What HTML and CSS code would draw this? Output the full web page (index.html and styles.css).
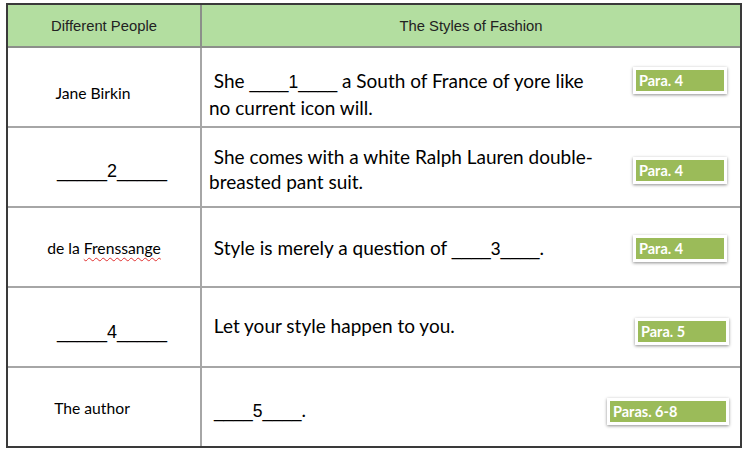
FILE: index.html
```html
<!DOCTYPE html>
<html>
<head>
<meta charset="utf-8">
<link rel="stylesheet" href="styles.css">
</head>
<body>
<div class="table">
  <div class="row head">
    <div class="cell left"><span>Different People</span></div>
    <div class="cell right"><span>The Styles of Fashion</span></div>
  </div>
  <div class="row r1">
    <div class="cell left"><span class="name">Jane Birkin</span></div>
    <div class="cell right">
      <p class="text">&nbsp;She <span class="us">____1____</span> a South of France of yore like<br>no current icon will.</p>
      <div class="badge">Para. 4</div>
    </div>
  </div>
  <div class="row r2">
    <div class="cell left"><span class="blank us">_____2_____</span></div>
    <div class="cell right">
      <p class="text">&nbsp;She comes with a white Ralph Lauren double-breasted pant suit.</p>
      <div class="badge">Para. 4</div>
    </div>
  </div>
  <div class="row r3">
    <div class="cell left"><span class="name">de la <span class="spell">Frenssange</span></span></div>
    <div class="cell right">
      <p class="text">&nbsp;Style is merely a question of <span class="us">____3____</span>.</p>
      <div class="badge">Para. 4</div>
    </div>
  </div>
  <div class="row r4">
    <div class="cell left"><span class="blank us">_____4_____</span></div>
    <div class="cell right">
      <p class="text">&nbsp;Let your style happen to you.</p>
      <div class="badge">Para. 5</div>
    </div>
  </div>
  <div class="row r5 last">
    <div class="cell left"><span class="name">The author</span></div>
    <div class="cell right">
      <p class="text">&nbsp;<span class="us">____5____</span>.</p>
      <div class="badge wide">Paras. 6-8</div>
    </div>
  </div>
</div>
</body>
</html>
```
FILE: styles.css
```css
* { box-sizing: border-box; }
body {
  margin: 0;
  background: #ffffff;
  font-family: "Lato", "Liberation Sans", sans-serif;
  color: #000;
}
.table {
  margin: 3px 0 0 6px;
  width: 736px;
  border: 2px solid #3a3a3a;
  display: flex;
  flex-direction: column;
}
.row {
  display: grid;
  grid-template-columns: 194px 538px;
  height: 80px;
  border-bottom: 2px solid #a6a6a6;
}
.row.last {
  height: 78px;
  border-bottom: none;
}
.row.head {
  height: 43px;
  background: #b3dea0;
  border-bottom: 2px solid #8c8f8a;
}
.cell {
  display: flex;
  align-items: center;
}
.cell.left {
  justify-content: center;
  border-right: 2px solid #a6a6a6;
}
.head .cell.left { border-right-color: #8c8f8a; }
.head .cell {
  font-family: "Liberation Sans", Arial, sans-serif;
  font-size: 14.8px;
  color: #222;
  padding-top: 1px;
}
.cell.right {
  padding: 0 13px 0 7px;
  justify-content: space-between;
}
.head .cell.right {
  justify-content: center;
  padding: 1px 0 0 0;
}
.name { font-size: 15.7px; }
.us {
  font-family: "Liberation Sans", Arial, sans-serif;
  font-size: 17.5px;
}
.blank.us {
  font-size: 18px;
}
.spell {
  text-decoration: underline wavy #e03030;
  text-decoration-thickness: 1px;
  text-underline-offset: 3px;
}
.text {
  margin: 0;
  font-size: 19px;
  line-height: 25px;
  width: 390px;
}
.badge {
  flex: none;
  width: 94px;
  height: 27px;
  border: 3px solid #fff;
  background: #9bbb59;
  color: #fff;
  font-weight: 700;
  font-size: 14.5px;
  line-height: 21px;
  padding-left: 3px;
  box-shadow: 0 1px 3px rgba(0,0,0,0.45);
}
.badge.wide { width: 122px; }
.r1 .left > span { margin-top: 12px; margin-right: 22px; }
.r1 .text { margin-top: 14px; }
.r1 .badge { margin-bottom: 14px; }
.r2 .left > span { margin-top: 8px; margin-left: 16px; }
.r2 .text { margin-top: 4px; }
.r2 .badge { margin-top: 6px; }
.r3 .left > span { margin-top: 2px; }
.r3 .text { margin-top: 2px; }
.r3 .badge { margin-top: 2px; }
.r4 .left > span { margin-top: 10px; margin-left: 16px; }
.r4 .text { margin-bottom: 4px; }
.r4 .badge { margin-top: 8px; margin-right: -2px; }
.r5 .left > span { margin-top: 2px; margin-right: 24px; }
.r5 .text { margin-top: 6px; }
.r5 .badge { margin-top: 8px; margin-right: -2px; }
```
